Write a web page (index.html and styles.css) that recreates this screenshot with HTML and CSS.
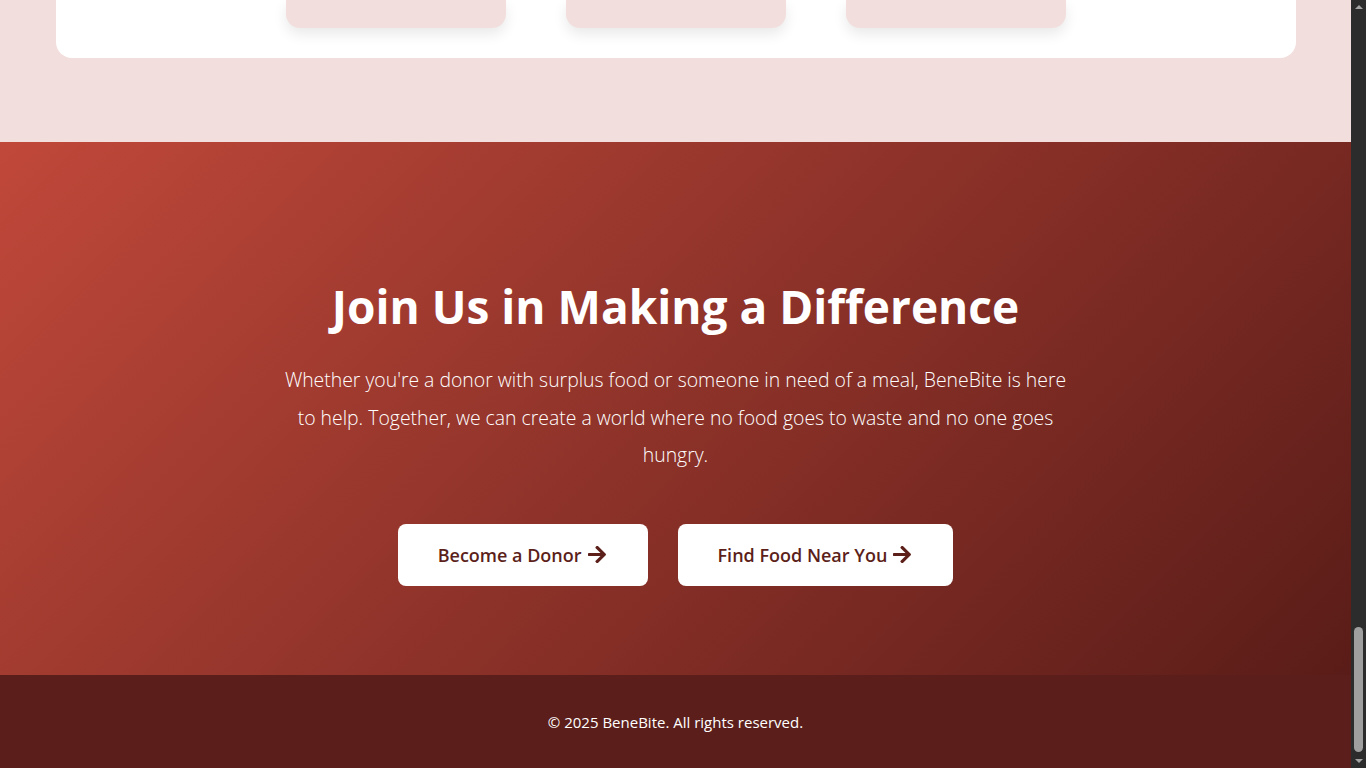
FILE: index.html
```html
<!DOCTYPE html>
<html lang="en">
<head>
<meta charset="utf-8">
<title>BeneBite</title>
<link rel="stylesheet" href="styles.css">
</head>
<body>
<div class="frame">
  <div class="page">
    <section class="features">
      <div class="card">
        <div class="tile"></div>
        <div class="tile"></div>
        <div class="tile"></div>
      </div>
    </section>
    <section class="cta">
      <h2 class="cta-title">Join Us in Making a Difference</h2>
      <p class="cta-text">Whether you're a donor with surplus food or someone in need of a meal, BeneBite is here to help. Together, we can create a world where no food goes to waste and no one goes hungry.</p>
      <div class="cta-buttons">
        <a class="btn" href="#">Become a Donor <svg class="arrow" viewBox="0 44 448 424"><path d="M190.5 66.9l22.2-22.2c9.4-9.4 24.6-9.4 33.9 0L441 239c9.4 9.4 9.4 24.6 0 33.9L246.6 467.3c-9.4 9.4-24.6 9.4-33.9 0l-22.2-22.2c-9.5-9.5-9.3-25 .4-34.3L311.4 296H24c-13.3 0-24-10.7-24-24v-32c0-13.3 10.7-24 24-24h287.4L190.9 101.2c-9.8-9.3-10-24.8-.4-34.3z"/></svg></a>
        <a class="btn" href="#">Find Food Near You <svg class="arrow" viewBox="0 44 448 424"><path d="M190.5 66.9l22.2-22.2c9.4-9.4 24.6-9.4 33.9 0L441 239c9.4 9.4 9.4 24.6 0 33.9L246.6 467.3c-9.4 9.4-24.6 9.4-33.9 0l-22.2-22.2c-9.5-9.5-9.3-25 .4-34.3L311.4 296H24c-13.3 0-24-10.7-24-24v-32c0-13.3 10.7-24 24-24h287.4L190.9 101.2c-9.8-9.3-10-24.8-.4-34.3z"/></svg></a>
      </div>
    </section>
    <footer class="footer">
      <p>&copy; 2025 BeneBite. All rights reserved.</p>
    </footer>
  </div>
  <div class="scrollbar">
    <span class="sb-up"></span>
    <div class="sb-track"><div class="sb-thumb"></div></div>
    <span class="sb-down"></span>
  </div>
</div>
</body>
</html>
```
FILE: styles.css
```css
* { box-sizing: border-box; }
html, body { margin: 0; padding: 0; height: 100%; }
body {
  font-family: "Open Sans", "Noto Sans", sans-serif;
  background: #f2dfdd;
  overflow: hidden;
}
.frame {
  display: grid;
  grid-template-columns: 1fr 15px;
  height: 768px;
}
.page {
  display: flex;
  flex-direction: column;
  overflow: hidden;
}
.features {
  background: #f2dfdd;
  padding: 0 55px 84px 56px;
}
.card {
  background: #fff;
  border-radius: 0 0 16px 16px;
  height: 58px;
  display: flex;
  justify-content: center;
  gap: 60px;
}
.tile {
  width: 220px;
  height: 28px;
  background: #f2dfdd;
  border-radius: 0 0 14px 14px;
  box-shadow: 0 6px 14px rgba(0, 0, 0, 0.09);
}
.cta {
  height: 533px;
  background: linear-gradient(135deg, #c0483a 0%, #5a1c18 100%);
  color: #fff;
  text-align: center;
  padding: 136px 20px 0;
  display: flex;
  flex-direction: column;
  align-items: center;
}
.cta-title {
  margin: 0 0 27px;
  font-size: 46px;
  font-weight: 700;
  line-height: 56px;
}
.cta-text {
  margin: 0 0 50px;
  max-width: 790px;
  font-size: 19.4px;
  font-weight: 300;
  line-height: 37.5px;
}
.cta-buttons {
  display: flex;
  gap: 30px;
  justify-content: center;
}
.btn {
  display: flex;
  align-items: center;
  gap: 6px;
  height: 62px;
  padding: 0 42px 0 40px;
  background: #fff;
  color: #5c1f1a;
  border-radius: 8px;
  text-decoration: none;
  font-size: 18px;
  font-weight: 600;
}
.arrow {
  width: 18px;
  height: 17px;
  fill: #5c1f1a;
}
.footer {
  flex: 1;
  background: #5b1e1a;
  color: #fff;
  display: flex;
  align-items: center;
  justify-content: center;
}
.footer p {
  margin: 0;
  font-size: 15px;
}
.scrollbar {
  background: #2c2c2c;
  display: flex;
  flex-direction: column;
  align-items: center;
}
.sb-up, .sb-down {
  width: 0;
  height: 0;
  border-left: 4px solid transparent;
  border-right: 4px solid transparent;
  margin: 5px 0;
}
.sb-up { border-bottom: 4px solid #a3a3a3; }
.sb-down { border-top: 4px solid #a3a3a3; }
.sb-track {
  flex: 1;
  width: 100%;
  display: flex;
  flex-direction: column;
  justify-content: flex-end;
  align-items: center;
  padding-bottom: 2px;
}
.sb-thumb {
  width: 9px;
  height: 125px;
  background: #9f9f9f;
  border-radius: 5px;
}
```
